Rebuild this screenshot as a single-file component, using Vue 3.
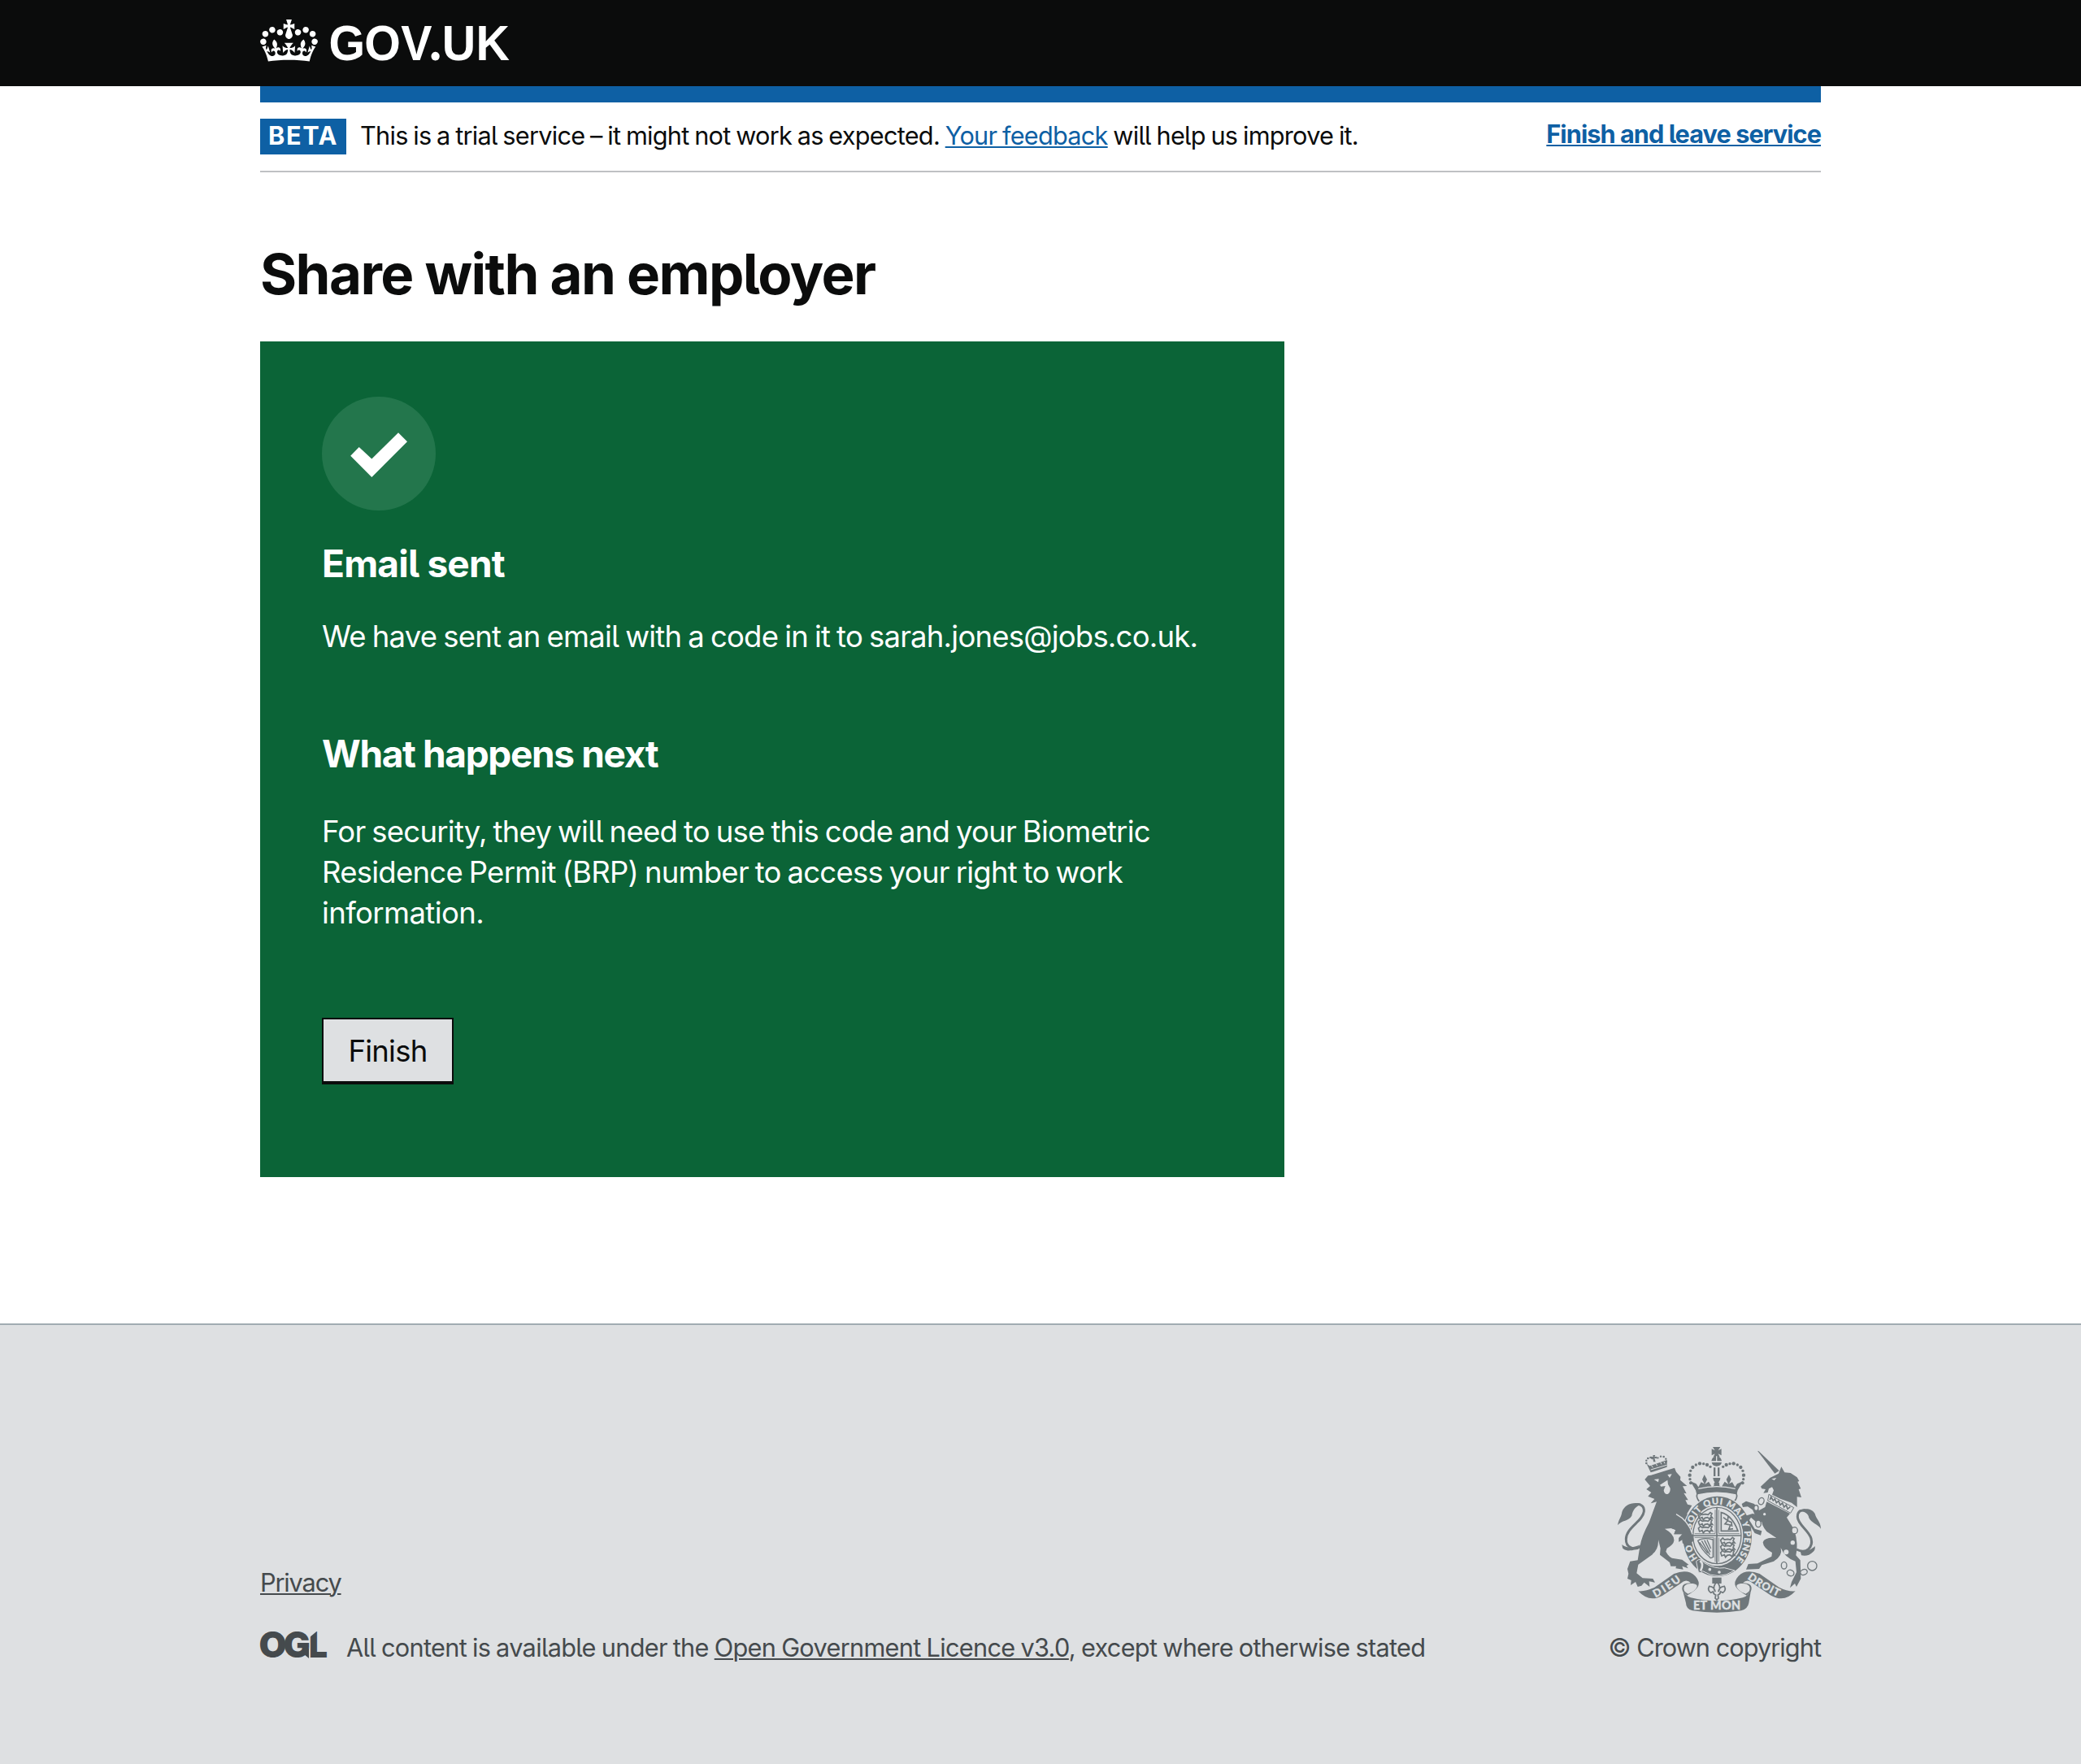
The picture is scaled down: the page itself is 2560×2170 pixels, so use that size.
<script setup>
const securityLines = [
  'For security, they will need to use this code and your Biometric',
  'Residence Permit (BRP) number to access your right to work',
  'information.',
]

// Pearls on one half of the royal crown; the other half is mirrored.
const pearls = [
  [300, 163, 6], [297, 149, 5], [296, 134, 6.5], [299, 118, 5], [307, 105, 6.5],
  [319, 96, 5], [333, 91, 6.5], [347, 92, 5], [360, 96, 6.5], [372, 103, 5],
]
const smallPearls = [
  [136, 90, 4], [136, 80, 3.5], [142, 72, 4], [151, 69, 3.5],
  [209, 84, 4], [208, 74, 3.5], [200, 66, 4], [189, 65, 3.5], [178, 70, 3.5], [158, 73, 3],
]
const links = [
  [560, 230, 10, 13, 20], [541, 255, 8, 10, 0], [549, 313, 10, 13, 0], [683, 338, 11, 12, 0],
  [644, 467, 10, 13, 0], [668, 495, 13, 11, 20], [717, 492, 13, 10, -20], [748, 469, 17, 17, 0],
]
const lions = [[0, 0], [0, 24], [0, 48], [82, 92], [82, 116], [82, 138]]
</script>

<template>
  <div class="page">
    <header class="header">
      <div class="container header-inner">
        <svg class="crown" viewBox="0 0 132 97" aria-hidden="true">
          <path fill="#fff" fill-rule="evenodd" d="M25 30.2c3.5 1.5 7.7-.2 9.1-3.7 1.5-3.6-.2-7.8-3.9-9.2-3.6-1.4-7.6.3-9.1 3.9-1.4 3.5.3 7.5 3.9 9zM9 39.5c3.6 1.5 7.8-.2 9.2-3.7 1.5-3.6-.2-7.8-3.9-9.1-3.6-1.5-7.6.2-9.1 3.8-1.4 3.5.3 7.5 3.8 9zM4.4 57.2c3.5 1.5 7.7-.2 9.1-3.8 1.5-3.6-.2-7.7-3.9-9.1-3.5-1.5-7.6.3-9.1 3.8-1.4 3.5.3 7.6 3.9 9.1zm38.3-21.4c3.5 1.5 7.7-.2 9.1-3.8 1.5-3.6-.2-7.7-3.9-9.1-3.6-1.5-7.6.3-9.1 3.8-1.3 3.6.4 7.7 3.9 9.1zm64.4-5.6c-3.6 1.5-7.8-.2-9.1-3.7-1.5-3.6.2-7.8 3.8-9.2 3.6-1.4 7.7.3 9.2 3.9 1.3 3.5-.4 7.5-3.9 9zm15.9 9.3c-3.6 1.5-7.7-.2-9.1-3.7-1.5-3.6.2-7.8 3.7-9.1 3.6-1.5 7.7.2 9.2 3.8 1.5 3.5-.3 7.5-3.8 9zm4.7 17.7c-3.6 1.5-7.8-.2-9.2-3.8-1.5-3.6.2-7.7 3.9-9.1 3.6-1.5 7.7.3 9.2 3.8 1.3 3.5-.4 7.6-3.9 9.1zM89.3 35.8c-3.6 1.5-7.8-.2-9.2-3.8-1.4-3.6.2-7.7 3.9-9.1 3.6-1.5 7.7.3 9.2 3.8 1.4 3.6-.3 7.7-3.9 9.1zM69.7 17.7l8.9 4.7V9.3l-8.9 2.8c-.2-.3-.5-.6-.9-.9L72.4 0H59.6l3.5 11.2c-.3.3-.6.5-.9.9l-8.8-2.8v13.1l8.8-4.7c.3.3.6.7.9.9l-5 15.4v.1c-.2.8-.4 1.6-.4 2.4 0 4.1 3.1 7.5 7 8.1h.2c.3 0 .7.1 1 .1.4 0 .7 0 1-.1h.2c4-.6 7.1-4.1 7.1-8.1 0-.8-.1-1.7-.4-2.4V34l-5.1-15.4c.4-.2.7-.6 1-.9zM66 92.8c16.9 0 32.8 1.1 47.1 3.2 4-16.9 8.9-26.7 14-33.5l-9.6-3.4c1 4.9 1.1 7.2 0 10.2-1.5-1.4-3-4.3-4.2-8.7L108.6 76c2.8-2 5-3.2 7.5-3.3-4.4 9.4-10 11.9-13.6 11.2-4.3-.8-6.3-4.6-5.6-7.9 1-4.7 5.7-5.9 8-.5 4.3-8.7-3-11.4-7.6-8.8 7.1-7.2 7.9-13.5 2.1-21.1-8 6.1-8.1 12.3-4.5 20.8-4.7-5.4-12.1-2.5-9.5 6.2 3.4-5.2 7.9-2 7.2 3.1-.6 4.3-6.4 7.8-13.5 7.2-10.3-.9-10.9-8-11.2-13.8 2.5-.5 7.1 1.8 11 7.3L80.2 60c-4.1 4.4-8 5.3-12.3 5.4 1.4-4.4 8-11.6 8-11.6H55.5s6.4 7.2 7.9 11.6c-4.2-.1-8-1-12.3-5.4l1.4 16.4c3.9-5.5 8.5-7.7 10.9-7.3-.3 5.8-.9 12.8-11.1 13.8-7.2.6-12.9-2.9-13.5-7.2-.7-5 3.8-8.3 7.1-3.1 2.7-8.7-4.6-11.6-9.4-6.2 3.7-8.5 3.6-14.7-4.6-20.8-5.8 7.6-5 13.9 2.2 21.1-4.7-2.6-11.9.1-7.7 8.8 2.3-5.5 7.1-4.2 8.1.5.7 3.3-1.3 7.1-5.7 7.9-3.5.7-9-1.8-13.5-11.2 2.5.1 4.7 1.3 7.5 3.3l-4.7-15.4c-1.2 4.4-2.7 7.2-4.3 8.7-1.1-3-.9-5.3 0-10.2l-9.5 3.4c5 6.9 9.9 16.7 14 33.5 14.8-2.1 30.8-3.2 47.7-3.2z" />
        </svg>
        <svg class="wordmark" viewBox="84 0 230 106">
          <g transform="scale(.94 1)" fill="#fff">
            <text class="wordmark-text" x="90 136.4 184.2 221.6 238 282.5" y="74">GOV<tspan class="wordmark-dot">.</tspan>UK</text>
          </g>
        </svg>
      </div>
    </header>

    <div class="container">
      <div class="blue-bar"></div>
      <div class="phase">
        <div class="phase-left">
          <strong class="tag">BETA</strong>
          <span class="phase-text">This is a trial service – it might not work as expected. <a href="#">Your feedback</a> will help us improve it.</span>
        </div>
        <a class="leave" href="#">Finish and leave service</a>
      </div>

      <main>
        <h1>Share with an employer</h1>
        <section class="panel">
          <svg class="tick" viewBox="0 0 140 140" aria-hidden="true">
            <circle cx="70" cy="70" r="70" fill="#23764c" />
            <path fill="#fff" d="M35.2 72.8 45.7 62 61.3 76.6 94 44.2 105 55.2 61.3 99z" />
          </svg>
          <h2 class="sent">Email sent</h2>
          <p class="to">We have sent an email with a code in it to sarah.jones@jobs.co.uk.</p>
          <h2 class="next">What happens next</h2>
          <p class="security">
            <span v-for="line in securityLines" :key="line">{{ line }}</span>
          </p>
          <button type="button">Finish</button>
        </section>
      </main>
    </div>

    <footer class="footer">
      <div class="container footer-inner">
        <div class="footer-left">
          <div class="line"><a class="privacy" href="#">Privacy</a></div>
          <div class="licence">
            <svg class="ogl" viewBox="-2 -2 88 40">
              <text x="-1.6 28.6" y="33">OG</text>
              <text x="60" y="33" textLength="23" lengthAdjust="spacingAndGlyphs">L</text>
              <path d="M53 22h7v12l-6-5z" fill="#454a4d" />
              <path d="M59 -2h14L61 8z" fill="#dee0e2" />
            </svg>
            <span class="licence-text">All content is available under the <a href="#">Open Government Licence v3.0</a>, except where otherwise stated</span>
          </div>
        </div>

        <div class="footer-right">
          <svg class="crest" viewBox="30 30 750 612">
            <defs>
              <path id="motto" d="M298 360A100 118 0 0 1 498 360A100 118 0 0 1 398 478" />
              <path id="motto-start" d="M398 478A100 118 0 0 1 298 360" />
              <path id="dieu" d="M170 586Q220 560 280 512" />
              <path id="droit" d="M508 516Q555 552 634 588" />
            </defs>

            <!-- lion -->
            <path d="M116 396C92 414 60 402 61 370C62 326 122 306 127 268C129 246 112 239 96 243" fill="none" stroke="#6f777b" stroke-width="9" />
            <path d="M30 318C34 296 44 288 46 270C56 242 84 232 118 240C96 250 86 262 82 284C70 304 46 300 30 318zM46 390C60 404 88 404 114 390C96 406 90 412 78 412C64 414 50 408 48 402z" />
            <path d="M130 150L142 136L154 134L240 107L246 122L262 140L261 152L286 174L270 175L284 202L274 200L290 226L280 226L288 242L304 246L286 276L300 308L298 334L308 378L298 382L290 364L285 386L270 386L268 372L256 380L256 366L270 352L238 352L244 336L228 330L204 332Q240 352 238 376Q236 392 212 404L208 416Q220 440 240 442L268 446L292 464L284 468L290 478L268 470L272 482L244 478L246 470L226 470L222 456L186 428L188 404L180 372Q182 414 148 434L106 464L100 496L122 514L160 516L168 530L146 526L148 546L128 530L118 542L104 546L96 528L78 540L80 522L66 516L70 498L66 480L76 452L104 448L112 398Q118 360 146 308L174 232L152 238L166 222L142 212L154 198L136 186L150 174z" />
            <path d="M164 150L182 148L180 160zM214 132L230 130L222 144zM186 170L214 152L216 168L224 182C226 208 202 212 200 190L206 174L190 176z" fill="#dee0e2" />
            <path d="M137 92L148 100 212 78L212 104L152 124zM160 60h9l-3 7 8-2v8l-8-2 4 14h-8l-2-13-7 2v-9l8 2z" />
            <path d="M152 114L211 97" stroke="#dee0e2" stroke-width="3" />
            <path d="M154 97l6 9M172 92l4 8M188 86l4 8M201 84l3 7" stroke="#dee0e2" stroke-width="3" />
            <circle v-for="(p, i) in smallPearls" :key="'s' + i" :cx="p[0]" :cy="p[1]" :r="p[2]" />

            <!-- unicorn -->
            <path d="M546 44L551 46L626 118L610 128z" />
            <path d="M558 176L592 144L624 128L634 103L646 124L668 126L692 142L700 156L694 158L706 184L698 186L708 216L692 214L692 252L672 236L632 222L600 206L606 190L600 178L588 184L584 198L568 200L576 186L562 184z" />
            <path d="M598 148l18-4-8 9z" fill="#dee0e2" />
            <path d="M588 205L680 254L668 274L584 228z" fill="#dee0e2" stroke="#6f777b" stroke-width="3" />
            <path d="M592 226l4-12 8 14 6-6 6 14 8-7 6 15 8-7 6 15 8-8 5 15 10-8" fill="none" stroke="#6f777b" stroke-width="5" />
            <path d="M690 408C728 428 752 398 744 368C736 338 694 316 694 288C694 268 704 262 722 264" fill="none" stroke="#6f777b" stroke-width="9" />
            <path d="M698 264C724 254 748 258 758 276C762 296 780 306 780 332C768 314 746 312 736 292C734 276 722 268 698 264zM704 414C724 418 744 410 758 396C760 406 756 414 752 416C738 430 724 434 708 430z" />

            <!-- crown -->
            <path d="M381 30h28l-8 13 12-6v24l-12-6 6 12h-24l6-12-12 6V37l12 6z" />
            <path d="M376 82Q378 66 395 64Q412 66 414 82zM377 87h37Q411 101 395 101Q380 101 377 87zM384 106h7v32h-7zM399 106h7v32h-7z" />
            <path d="M395 64v20" stroke="#dee0e2" stroke-width="4" />
            <g>
              <path id="half-crown" d="M396 206Q360 206 324 214L318 190L298 156L320 166L328 178L338 160L350 166L342 150L350 132L360 150L352 168L366 158L378 178L386 172L382 144H396z" />
              <circle v-for="(p, i) in pearls" :key="'p' + i" :cx="p[0]" :cy="p[1]" :r="p[2]" />
            </g>
            <g transform="matrix(-1 0 0 1 791 0)">
              <use href="#half-crown" />
              <circle v-for="(p, i) in pearls" :key="'q' + i" :cx="p[0]" :cy="p[1]" :r="p[2]" />
            </g>
            <path d="M328 184Q396 168 464 184M380 150l6 10-8 10M411 150l-6 10 8 10" fill="none" stroke="#dee0e2" stroke-width="4" />
            <path d="M324 202Q396 186 468 202Q474 216 460 232H332Q318 216 324 202z" fill="#dee0e2" stroke="#6f777b" stroke-width="5" />

            <!-- garter and shield -->
            <ellipse cx="398" cy="360" rx="131" ry="151" fill="#dee0e2" />
            <ellipse cx="398" cy="360" rx="127" ry="148" />
            <ellipse cx="397" cy="357" rx="96" ry="112" fill="#dee0e2" />
            <ellipse cx="397" cy="357" rx="89" ry="104" fill="none" stroke="#6f777b" stroke-width="4" />
            <path d="M396 254v206M308 357h178" stroke="#6f777b" stroke-width="5" />
            <path d="M390 262v88H314M403 262v88H480M390 364v90M403 364v90M314 364h70v74" fill="none" stroke="#6f777b" stroke-width="2.5" />
            <path v-for="(l, i) in lions" :key="'n' + i" :transform="`translate(${l[0]} ${l[1]})`" d="M328 282l8-8 6 6 12-2 10 2 8-8 6 4-4 8 6 8-8-1-2 6-8-7-10 2-6 7-4-9-10 4z" fill="none" stroke="#6f777b" stroke-width="5" />
            <path d="M412 340V272Q452 282 474 340zM420 290l16 12-10 12 20 4-6 16 16-2M438 286l-2 16 14 6 2 16" fill="none" stroke="#6f777b" stroke-width="5" />
            <path d="M326 376Q344 362 382 372V436Q372 444 368 434Q340 412 326 376zM340 376l30 52M350 374l22 44M360 373l14 32M332 382l30 40" fill="none" stroke="#6f777b" stroke-width="4" />
            <g class="motto">
              <text font-size="33"><textPath href="#motto" startOffset="28" textLength="408">SOIT QUI MAL Y PENSE</textPath></text>
              <text font-size="33"><textPath href="#motto-start" startOffset="84" textLength="58">HO</textPath></text>
            </g>
            <path d="M320 452Q336 436 350 458Q390 482 424 476L462 486Q400 524 344 488Q338 498 328 492z" stroke="#dee0e2" stroke-width="3" />
            <path d="M334 450Q350 460 336 488" fill="none" stroke="#dee0e2" stroke-width="8" />
            <circle cx="370" cy="482" r="5.5" fill="#dee0e2" />
            <circle cx="405" cy="492" r="5.5" fill="#dee0e2" />

            <!-- lion's raised paw, in front of the garter -->
            <path d="M246 280Q290 300 304 346L311 376L300 384L290 364L287 386L270 386L268 372L256 380L256 366L268 352L238 352L244 336L228 330z" />
            <path d="M246 278C276 294 296 318 306 352" fill="none" stroke="#dee0e2" stroke-width="4" />

            <!-- unicorn body and chain -->
            <path d="M580 232L666 276L654 290L682 336Q698 390 688 430L704 448L706 516L690 546L684 534L666 550L672 528L690 492L686 452Q646 438 632 402Q640 432 606 452L562 466L552 480L504 482L512 462L546 460L598 434L600 420Q568 404 566 382Q572 362 616 366L580 342Q558 316 562 294L540 288L528 262L510 250L492 252L488 240L504 230L534 240L552 264L574 252z" />
            <path d="M564 284L574 306L540 306L522 290L516 300L536 332L562 340L558 356L536 348L508 302L502 284L528 276z" />
            <g fill="#dee0e2">
              <circle cx="676" cy="383" r="8" /><circle cx="652" cy="418" r="9" /><circle cx="572" cy="278" r="5" />
            </g>
            <ellipse v-for="(l, i) in links" :key="'l' + i" :cx="l[0]" :cy="l[1]" :rx="l[2]" :ry="l[3]" :transform="`rotate(${l[4]} ${l[0]} ${l[1]})`" fill="#dee0e2" stroke="#6f777b" stroke-width="4" />

            <!-- ribbon -->
            <path d="M106 562Q136 564 166 548L238 498Q288 478 316 506Q336 528 326 546Q318 560 286 578L270 562Q260 532 300 532Q282 514 262 534L196 578Q146 606 106 562z" />
            <path d="M290 572Q268 562 276 544Q284 532 308 534Q328 538 322 548Q314 562 294 570" fill="#dee0e2" />
            <path d="M686 562Q656 564 626 548L554 498Q504 478 476 506Q456 528 466 546Q474 560 506 578L522 562Q532 532 492 532Q510 514 530 534L596 578Q646 606 686 562z" />
            <path d="M502 572Q524 562 516 544Q508 532 484 534Q464 538 470 548Q478 562 498 570" fill="#dee0e2" />
            <path d="M270 558Q280 580 300 586Q396 610 492 586Q512 580 522 558L514 606Q510 628 486 634Q396 648 306 634Q282 628 282 606z" />
            <g class="motto">
              <text font-size="39"><textPath href="#dieu" textLength="114">DIEU</textPath></text>
              <text font-size="39"><textPath href="#droit" textLength="132">DROIT</textPath></text>
              <text font-size="43" x="309" y="631" textLength="174">ET MON</text>
            </g>

            <!-- fleur-de-lis -->
            <path d="M379 512h34v22h-34z" />
            <path d="M396 528Q414 546 402 564Q404 546 424 544Q432 558 418 568L410 564Q408 574 400 576L402 588L396 594L390 588L392 576Q384 574 382 564L374 568Q360 558 368 544Q388 546 390 564Q378 546 396 528z" fill="#dee0e2" stroke="#6f777b" stroke-width="5" />
          </svg>
          <div class="line copyright">© Crown copyright</div>
        </div>
      </div>
    </footer>
  </div>
</template>

<style>
body {
  background: #fff;
}
</style>

<style scoped>
.page {
  font-family: Inter, 'Noto Sans', sans-serif;
  font-feature-settings: 'cv05';
  font-size: 30.7px;
  color: #0b0c0c;
}
.container {
  width: 1920px;
  margin: 0 auto;
}
a {
  color: #0e60a4;
  text-decoration: underline;
  text-decoration-thickness: 2px;
  text-underline-offset: 2px;
}
.header {
  height: 106px;
  background: #0b0c0c;
}
.header-inner {
  display: flex;
  align-items: flex-start;
}
.crown {
  width: 71px;
  height: 52px;
  margin-top: 24px;
}
.wordmark {
  width: 230px;
  height: 106px;
  margin-left: 13px;
}
.wordmark-text {
  font: 700 61px 'Liberation Sans', sans-serif;
}
.wordmark-dot {
  font: 900 66px Lato, sans-serif;
}
.blue-bar {
  height: 20px;
  background: #0e60a4;
}
.phase {
  display: flex;
  justify-content: space-between;
  align-items: flex-start;
  padding: 20px 0;
  border-bottom: 2px solid #bfc1c3;
  white-space: nowrap;
}
.phase-left {
  display: flex;
}
.tag {
  width: 96px;
  height: 44px;
  padding-left: 10px;
  margin-right: 17px;
  background: #0e60a4;
  color: #fff;
  font-weight: 700;
  line-height: 42px;
  letter-spacing: 1.6px;
}
.phase-text {
  line-height: 42px;
  letter-spacing: -0.75px;
  word-spacing: -1.2px;
}
.leave {
  font-weight: 700;
  line-height: 38px;
  letter-spacing: -0.95px;
}
h1 {
  margin: 87px 0 45px;
  font-size: 69px;
  line-height: 76px;
  font-weight: 700;
  letter-spacing: -1.6px;
}
.panel {
  box-sizing: border-box;
  width: 1260px;
  height: 1028px;
  padding: 68px 0 0 76px;
  background: #0b6437;
  color: #fff;
  white-space: nowrap;
}
.tick {
  display: block;
  width: 140px;
  height: 140px;
}
h2 {
  font-size: 46px;
  line-height: 54px;
  font-weight: 700;
}
.sent {
  margin: 38px 0;
  letter-spacing: -0.8px;
}
.next {
  margin: 92px 0 44px;
  letter-spacing: -1.35px;
}
p {
  margin: 0;
  font-size: 36.5px;
  line-height: 50px;
}
.to {
  letter-spacing: -0.79px;
  word-spacing: -1.5px;
}
.security {
  letter-spacing: -0.75px;
  word-spacing: -1.7px;
}
.security span {
  display: block;
}
.security span:last-child {
  letter-spacing: -0.6px;
}
button {
  display: block;
  box-sizing: border-box;
  width: 162px;
  height: 82px;
  margin: 104px 0 0;
  padding: 2px 0 0;
  border: 2px solid #0b0c0c;
  border-bottom-width: 4px;
  border-radius: 0;
  background: #dee0e2;
  color: #0b0c0c;
  font: inherit;
  font-feature-settings: inherit;
  font-size: 36.5px;
  line-height: 74px;
  letter-spacing: -0.75px;
}
.footer {
  height: 540px;
  margin-top: 180px;
  border-top: 2px solid #a1acb2;
  background: #dee0e2;
  color: #454a4d;
}
.footer-inner {
  display: flex;
  justify-content: space-between;
  align-items: flex-end;
  padding-top: 150px;
  white-space: nowrap;
}
.footer a {
  color: #454a4d;
}
.line {
  line-height: 40px;
}
.privacy {
  letter-spacing: -1.15px;
}
.licence {
  display: flex;
  height: 40px;
  margin-top: 40px;
}
.ogl {
  width: 88px;
  height: 40px;
  margin: -3px 20px 0 -2px;
}
.ogl text {
  font: 900 44px Inter, sans-serif;
  fill: #454a4d;
}
.licence-text {
  line-height: 40px;
  letter-spacing: -0.69px;
  word-spacing: -1px;
}
.footer-right {
  display: flex;
  flex-direction: column;
  align-items: flex-end;
}
.crest {
  width: 250px;
  height: 204px;
  margin-bottom: 23px;
  fill: #6f777b;
}
.motto {
  font-family: Lato, sans-serif;
  font-weight: 900;
  fill: #dee0e2;
  stroke: #dee0e2;
  stroke-width: 1;
}
.copyright {
  letter-spacing: -0.95px;
}
</style>
